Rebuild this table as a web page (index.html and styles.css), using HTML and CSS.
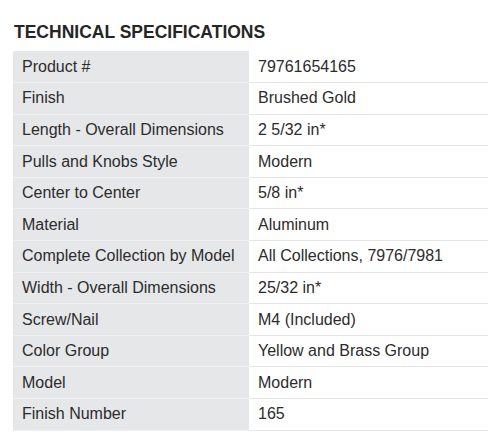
FILE: index.html
```html
<!DOCTYPE html>
<html>
<head>
<meta charset="utf-8">
<link rel="stylesheet" href="styles.css">
</head>
<body>
<div class="page">
  <h2 class="title">TECHNICAL SPECIFICATIONS</h2>
  <table class="specs">
    <tr><td class="k">Product #</td><td class="v">79761654165</td></tr>
    <tr><td class="k">Finish</td><td class="v">Brushed Gold</td></tr>
    <tr><td class="k">Length - Overall Dimensions</td><td class="v">2 5/32 in*</td></tr>
    <tr><td class="k">Pulls and Knobs Style</td><td class="v">Modern</td></tr>
    <tr><td class="k">Center to Center</td><td class="v">5/8 in*</td></tr>
    <tr><td class="k">Material</td><td class="v">Aluminum</td></tr>
    <tr><td class="k">Complete Collection by Model</td><td class="v">All Collections, 7976/7981</td></tr>
    <tr><td class="k">Width - Overall Dimensions</td><td class="v">25/32 in*</td></tr>
    <tr><td class="k">Screw/Nail</td><td class="v">M4 (Included)</td></tr>
    <tr><td class="k">Color Group</td><td class="v">Yellow and Brass Group</td></tr>
    <tr><td class="k">Model</td><td class="v">Modern</td></tr>
    <tr><td class="k">Finish Number</td><td class="v">165</td></tr>
  </table>
</div>
</body>
</html>
```
FILE: styles.css
```css
* { box-sizing: border-box; }
html, body { margin: 0; padding: 0; background: #fff; }
body { font-family: "Liberation Sans", Arial, sans-serif; color: #2a2a2a; }
.page { padding: 23px 12px 0 13px; }
.title {
  margin: 0 0 10px 1px;
  font-size: 17.5px;
  font-weight: bold;
  color: #252525;
  line-height: 18px;
}
.specs {
  width: 475px;
  border-collapse: collapse;
  font-size: 16px;
}
.specs td {
  height: 31.6px;
  padding: 0 9px;
  vertical-align: middle;
  border-bottom: 1px solid #e6e6e6;
}
.specs .k {
  width: 236px;
  background: #e6e7e9;
  border-bottom-color: #f0f0f2;
  color: #2c2c2c;
}
.specs .v { color: #2c2c2c; }
```
